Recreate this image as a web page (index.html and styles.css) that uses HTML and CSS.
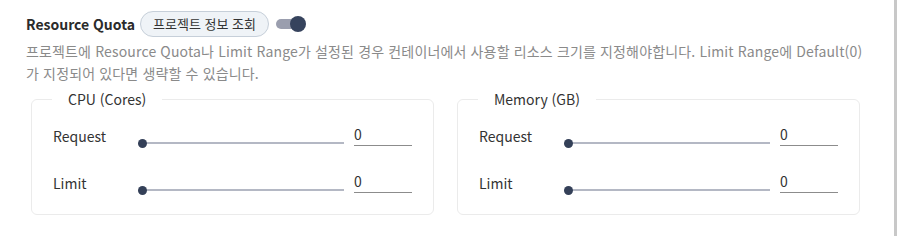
FILE: index.html
```html
<!DOCTYPE html>
<html lang="ko">
<head>
<meta charset="utf-8">
<title>Resource Quota</title>
<link rel="stylesheet" href="styles.css">
</head>
<body>
<div class="page">
  <div class="main">
    <div class="title-row">
      <span class="title">Resource Quota</span>
      <button class="chip" type="button">프로젝트 정보 조회</button>
      <span class="toggle"><span class="track"></span><span class="thumb"></span></span>
    </div>
    <p class="desc">프로젝트에 Resource Quota나 Limit Range가 설정된 경우 컨테이너에서 사용할 리소스 크기를 지정해야합니다. Limit Range에 Default(0)가 지정되어 있다면 생략할 수 있습니다.</p>
    <div class="boxes">
      <fieldset class="box">
        <legend class="legend">CPU (Cores)</legend>
        <div class="row">
          <span class="label">Request</span>
          <span class="slider"><span class="rail"></span><span class="knob"></span></span>
          <span class="input">0</span>
        </div>
        <div class="row">
          <span class="label">Limit</span>
          <span class="slider"><span class="rail"></span><span class="knob"></span></span>
          <span class="input">0</span>
        </div>
      </fieldset>
      <fieldset class="box">
        <legend class="legend">Memory (GB)</legend>
        <div class="row">
          <span class="label">Request</span>
          <span class="slider"><span class="rail"></span><span class="knob"></span></span>
          <span class="input">0</span>
        </div>
        <div class="row">
          <span class="label">Limit</span>
          <span class="slider"><span class="rail"></span><span class="knob"></span></span>
          <span class="input">0</span>
        </div>
      </fieldset>
    </div>
  </div>
  <div class="scroll"></div>
</div>
</body>
</html>
```
FILE: styles.css
```css
html, body {
  margin: 0;
  padding: 0;
  background: #ffffff;
}
body {
  font-family: "Noto Sans CJK KR", "Noto Sans", sans-serif;
  font-size: 14px;
  color: #333333;
}
.page {
  display: flex;
  height: 236px;
  overflow: hidden;
}
.main {
  flex: 1;
  padding: 10px 29px 0 26px;
}
.scroll {
  width: 3px;
  background: #c8c8c8;
}
.title-row {
  display: flex;
  align-items: center;
  height: 26px;
  margin-top: 1px;
}
.title {
  font-size: 14px;
  font-weight: 700;
  color: #2b2b2b;
  line-height: 22px;
  margin-right: 5px;
}
.chip {
  font-family: inherit;
  font-size: 13px;
  color: #333333;
  background: #eff3f7;
  border: 1px solid #c6cfd9;
  border-radius: 13px;
  height: 26px;
  padding: 0 12px;
  line-height: 22px;
  margin: 0 7px 0 0;
}
.toggle {
  position: relative;
  width: 31px;
  height: 18px;
  display: inline-block;
}
.track {
  position: absolute;
  left: 0;
  top: 4px;
  width: 26px;
  height: 10px;
  border-radius: 5px;
  background: #9a9eae;
}
.thumb {
  position: absolute;
  left: 14px;
  top: 1px;
  width: 16px;
  height: 16px;
  border-radius: 50%;
  background: #36435d;
}
.desc {
  margin: 3px 0 0 0;
  color: #8a8a8a;
  line-height: 22px;
  letter-spacing: 0.15px;
}
.boxes {
  display: grid;
  grid-template-columns: 403px 403px;
  column-gap: 23px;
  margin: 5px 0 0 5px;
}
.box {
  margin: 0;
  border: 1px solid #ebebeb;
  border-radius: 6px;
  padding: 15px 21px 19px 21px;
  min-width: 0;
}
.legend {
  padding: 0 16px;
  margin-left: -1px;
  line-height: 20px;
  color: #333333;
}
.row {
  display: flex;
  align-items: stretch;
  height: 24px;
}
.row + .row {
  margin-top: 23px;
}
.label {
  width: 85px;
  line-height: 24px;
  color: #333333;
}
.slider {
  position: relative;
  flex: 1;
  align-self: flex-end;
  height: 9px;
  margin-bottom: 0;
  margin-right: 10px;
}
.rail {
  position: absolute;
  left: 4px;
  right: 0;
  top: 3px;
  height: 2px;
  background: #b4b8c4;
}
.knob {
  position: absolute;
  left: 0;
  top: 0;
  width: 9px;
  height: 9px;
  border-radius: 50%;
  background: #344058;
}
.input {
  width: 58px;
  line-height: 21px;
  height: 21px;
  border-bottom: 1px solid #8c8c8c;
  color: #333333;
  padding-left: 0;
}
```
